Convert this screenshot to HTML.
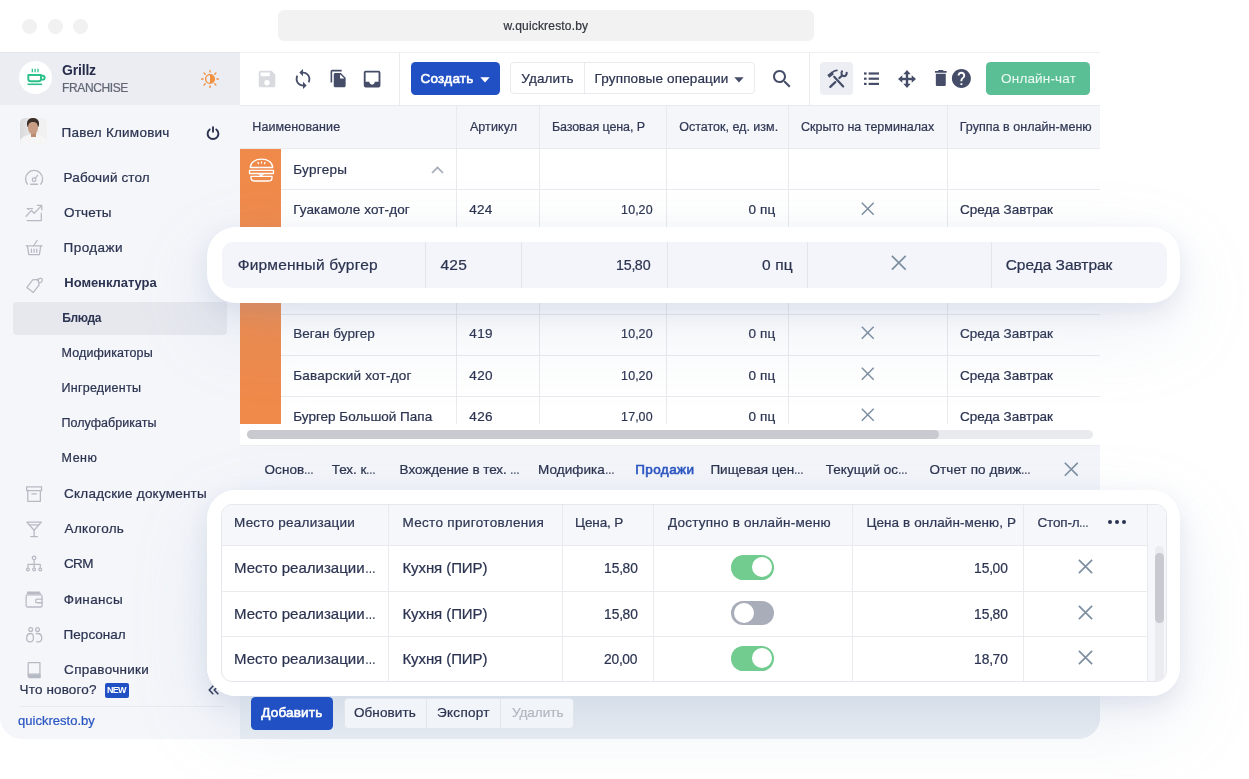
<!DOCTYPE html>
<html lang="ru"><head><meta charset="utf-8"><title>Quick Resto</title>
<style>
html,body{margin:0;padding:0}
body{width:1249px;height:779px;position:relative;overflow:hidden;background:#fff;font-family:"Liberation Sans",sans-serif}
#win{position:absolute;left:0;top:0;width:1100px;height:739px;overflow:hidden;will-change:transform;border-radius:0 0 22px 22px}
#cards{position:absolute;left:0;top:0;width:1249px;height:779px;will-change:transform}
.t{position:absolute;white-space:nowrap;line-height:1;-webkit-text-stroke:0.22px}
.el{display:inline-block;transform:scaleX(0.72);transform-origin:0 0;margin-right:-0.28em;letter-spacing:0}
.cm{margin:0 -0.03em 0 -0.02em}
</style></head><body>
<div id="win"><div style="position:absolute;left:0px;top:0px;width:1100px;height:52px;background:#fff"></div>
<div style="position:absolute;left:21.5px;top:18.5px;width:15px;height:15px;border-radius:50%;background:#f1f1f2"></div>
<div style="position:absolute;left:47.5px;top:18.5px;width:15px;height:15px;border-radius:50%;background:#f1f1f2"></div>
<div style="position:absolute;left:73.0px;top:18.5px;width:15px;height:15px;border-radius:50%;background:#f1f1f2"></div>
<div style="position:absolute;left:278px;top:10px;width:536px;height:30.5px;border-radius:6px;background:#f2f2f3"></div>
<span id="t1" class="t" style="left:503.60px;top:19.84px;font-size:12px;font-weight:400;color:#33363f;letter-spacing:0.168px;">w.quickresto.by</span>
<div style="position:absolute;left:0px;top:52px;width:240px;height:687px;background:#f4f6fa"></div>
<div style="position:absolute;left:0px;top:52px;width:240px;height:53.3px;background:#ecedf3;border-top:1px solid #e5e6ec;box-sizing:border-box"></div>
<div style="position:absolute;left:240px;top:52px;width:860px;height:687px;background:#fff"></div>
<div style="position:absolute;left:240px;top:52px;width:860px;height:1px;background:#eef0f3"></div>
<div style="position:absolute;left:240px;top:104.5px;width:860px;height:1px;background:#e8eaee"></div>
<div style="position:absolute;left:398.9px;top:52px;width:1px;height:53px;background:#e9ebef"></div>
<div style="position:absolute;left:809.1px;top:52px;width:1px;height:53px;background:#e9ebef"></div>
<div style="position:absolute;left:19px;top:61px;width:33px;height:33px;border-radius:50%;background:#fff"></div>
<svg style="position:absolute;left:19px;top:61px;" width="33" height="33" viewBox="0 0 33 33"><g fill="none" stroke="#2fc18c" stroke-width="1.950" stroke-linejoin="round">
<path d="M9.300 14H22v3.700a2.600 2.600 0 0 1-2.600 2.600H11.900a2.600 2.600 0 0 1-2.600-2.600z"/>
<path d="M22 14.800h1.700a1.900 1.900 0 0 1 0 3.800H21.800"/>
<path d="M8.500 23.300h14.600" stroke-width="1.600"/>
<path d="M13.300 7.700v3.600M16.100 7.700v3.600M19 7.700v3.600" stroke-width="1.300"/></g></svg>
<span id="t2" class="t" style="left:62.10px;top:63.15px;font-size:14px;font-weight:700;color:#262d4a;letter-spacing:-0.200px;-webkit-text-stroke:0;">Grillz</span>
<span id="t3" class="t" style="left:62.05px;top:81.64px;font-size:12px;font-weight:400;color:#626775;letter-spacing:-0.381px;">FRANCHISE</span>
<svg style="position:absolute;left:199.5px;top:68.5px;" width="20" height="20" viewBox="0 0 20 20"><g stroke="#f0913f" stroke-width="1.400" stroke-linecap="round" fill="none">
<circle cx="10" cy="10" r="4.400"/><path d="M10 5.600a4.400 4.400 0 0 1 0 8.800z" fill="#f0913f" stroke="none"/>
<path d="M10 1.600v1.500M10 16.900v1.500M1.600 10h1.500M16.900 10h1.500M4.100 4.100l1.100 1.100M14.800 14.800l1.100 1.100M4.100 15.900l1.100-1.100M14.800 5.200l1.100-1.100"/></g></svg>
<div style="position:absolute;left:19.800px;top:118.200px;width:27px;height:27.200px;border-radius:5px;overflow:hidden;background:linear-gradient(90deg,#dadadc,#f1f1f2 70%)"><div style="position:absolute;left:-1px;top:16.500px;width:29px;height:16px;border-radius:10px 10px 0 0;background:#f6f6f7"></div><div style="position:absolute;left:10.800px;top:13px;width:5px;height:6px;background:#b98a70"></div><div style="position:absolute;left:7.600px;top:0.300px;width:11.400px;height:10px;border-radius:50% 50% 35% 35%;background:#3b2f2a"></div><div style="position:absolute;left:8.700px;top:3.600px;width:9.200px;height:12.600px;border-radius:42% 42% 48% 48%;background:#c99c84"></div></div>
<span id="t4" class="t" style="left:61.60px;top:125.57px;font-size:13.5px;font-weight:400;color:#2b3350;letter-spacing:0.231px;">Павел Климович</span>
<svg style="position:absolute;left:205.2px;top:125px;" width="16" height="16" viewBox="0 0 16 16"><g fill="none" stroke="#2b3350" stroke-width="1.900" stroke-linecap="round"><path d="M4.700 4.400a5.400 5.400 0 1 0 6.600 0"/><path d="M8 2.200v4.600"/></g></svg>
<svg style="position:absolute;left:24.4px;top:168.3px;" width="20.2" height="20.2" viewBox="0 0 19 19"><g fill="none" stroke="#b7bac3" stroke-width="1.2" stroke-linecap="round" stroke-linejoin="round"><path d="M3.2 15.2a8 8 0 1 1 12.6 0"/><circle cx="9.5" cy="11" r="1.7"/><path d="M10.6 9.8l2.2-3"/><path d="M6.3 15.3h6.4"/></g></svg>
<span id="t5" class="t" style="left:63.60px;top:170.57px;font-size:13.5px;font-weight:400;color:#2b3350;letter-spacing:0.127px;">Рабочий стол</span>
<svg style="position:absolute;left:24.4px;top:203.3px;" width="20.2" height="20.2" viewBox="0 0 19 19"><g fill="none" stroke="#b7bac3" stroke-width="1.2" stroke-linecap="round" stroke-linejoin="round"><path d="M2 12.5l5-5.5 2.6 2.6L16.5 2.5"/><path d="M12.6 2.3h4.1v4.1"/><path d="M4.2 6v0M16.3 9.5v7H3"/><path d="M3 5.3h5"/></g></svg>
<span id="t6" class="t" style="left:64.10px;top:205.57px;font-size:13.5px;font-weight:400;color:#2b3350;letter-spacing:0.150px;">Отчеты</span>
<svg style="position:absolute;left:24.4px;top:238.3px;" width="20.2" height="20.2" viewBox="0 0 19 19"><g fill="none" stroke="#b7bac3" stroke-width="1.2" stroke-linecap="round" stroke-linejoin="round"><path d="M2 7.5h15"/><path d="M3.3 7.7l1.2 8h10l1.2-8"/><path d="M7 10.5v3M9.5 10.5v3M12 10.5v3"/><path d="M9 7.3l3.4-5"/></g></svg>
<span id="t7" class="t" style="left:63.60px;top:240.57px;font-size:13.5px;font-weight:400;color:#2b3350;letter-spacing:0.417px;">Продажи</span>
<svg style="position:absolute;left:24.4px;top:273.69999999999993px;" width="20.2" height="20.2" viewBox="0 0 19 19"><g fill="none" stroke="#b7bac3" stroke-width="1.2" stroke-linecap="round" stroke-linejoin="round"><path d="M2.3 11.8l6.4-6.4 5.2 0.2 0.2 5.2-6.4 6.4z" transform="rotate(-8 9.5 9.5)"/><path d="M12.5 6.2c1.2-2.4 3.8-3 4.6-1.2.6 1.5-.8 3-2.4 3.2"/></g></svg>
<span id="t8" class="t" style="left:64.35px;top:276.40px;font-size:13px;font-weight:700;color:#2b3350;letter-spacing:-0.059px;-webkit-text-stroke:0;">Номенклатура</span>
<div style="position:absolute;left:13px;top:302px;width:214px;height:32.5px;border-radius:4px;background:#e6e8ee"></div>
<span id="t9" class="t" style="left:62.35px;top:312.44px;font-size:12px;font-weight:700;color:#2b3350;letter-spacing:-0.400px;-webkit-text-stroke:0;">Блюда</span>
<span id="t10" class="t" style="left:61.60px;top:346.82px;font-size:12.5px;font-weight:400;color:#2b3350;letter-spacing:0.127px;">Модификаторы</span>
<span id="t11" class="t" style="left:61.60px;top:381.82px;font-size:12.5px;font-weight:400;color:#2b3350;letter-spacing:0.235px;">Ингредиенты</span>
<span id="t12" class="t" style="left:61.60px;top:417.02px;font-size:12.5px;font-weight:400;color:#2b3350;letter-spacing:0.021px;">Полуфабрикаты</span>
<span id="t13" class="t" style="left:61.60px;top:452.02px;font-size:12.5px;font-weight:400;color:#2b3350;letter-spacing:0.500px;">Меню</span>
<svg style="position:absolute;left:24.4px;top:484.29999999999995px;" width="20.2" height="20.2" viewBox="0 0 19 19"><g fill="none" stroke="#b7bac3" stroke-width="1.2" stroke-linecap="round" stroke-linejoin="round"><rect x="2.5" y="2.7" width="14" height="3.6"/><path d="M3.6 6.5v9.8h11.8V6.5"/><path d="M7.5 9.3h4"/></g></svg>
<span id="t14" class="t" style="left:64.10px;top:486.57px;font-size:13.5px;font-weight:400;color:#2b3350;letter-spacing:0.217px;">Складские документы</span>
<svg style="position:absolute;left:24.4px;top:519.3px;" width="20.2" height="20.2" viewBox="0 0 19 19"><g fill="none" stroke="#b7bac3" stroke-width="1.2" stroke-linecap="round" stroke-linejoin="round"><path d="M2.7 3h13.6L9.5 10.6z"/><path d="M9.5 10.6v5.8M6.3 16.5h6.4"/><path d="M5 5.6h9"/></g></svg>
<span id="t15" class="t" style="left:64.60px;top:521.57px;font-size:13.5px;font-weight:400;color:#2b3350;letter-spacing:0.293px;">Алкоголь</span>
<svg style="position:absolute;left:24.4px;top:554.3px;" width="20.2" height="20.2" viewBox="0 0 19 19"><g fill="none" stroke="#b7bac3" stroke-width="1.2" stroke-linecap="round" stroke-linejoin="round"><circle cx="9.5" cy="3.6" r="1.7"/><path d="M9.5 5.4v4.2M3.7 13v-3.3h11.6V13M9.5 9.7V13"/><circle cx="3.7" cy="14.6" r="1.3"/><circle cx="9.5" cy="14.6" r="1.3"/><circle cx="15.3" cy="14.6" r="1.3"/></g></svg>
<span id="t16" class="t" style="left:64.10px;top:556.57px;font-size:13.5px;font-weight:400;color:#2b3350;letter-spacing:-0.725px;">CRM</span>
<svg style="position:absolute;left:24.4px;top:590.4px;" width="20.2" height="20.2" viewBox="0 0 19 19"><g fill="none" stroke="#b7bac3" stroke-width="1.2" stroke-linecap="round" stroke-linejoin="round"><rect x="2" y="4.6" width="15" height="11.4" rx="1.5"/><path d="M3 3.2h12.5M3.5 1.9h11"/><path d="M17 8.6h-4.4a1.7 1.7 0 0 0 0 3.4H17"/></g></svg>
<span id="t17" class="t" style="left:63.85px;top:592.67px;font-size:13.5px;font-weight:400;color:#2b3350;letter-spacing:0.358px;">Финансы</span>
<svg style="position:absolute;left:24.4px;top:625.4px;" width="20.2" height="20.2" viewBox="0 0 19 19"><g fill="none" stroke="#b7bac3" stroke-width="1.2" stroke-linecap="round" stroke-linejoin="round"><circle cx="6.3" cy="4.2" r="1.8"/><circle cx="12.7" cy="4.2" r="1.8"/><path d="M6.5 8c-2.6 0-4 1.6-4 4.2 0 2.2 1.2 3.6 3.2 3.6 1.8 0 3.2-1.2 3.2-3.6C8.9 9.6 8.3 8 6.5 8z"/><path d="M11.4 8h1.3c2.6 0 4 1.6 4 4.200 0 2.2-1.2 3.600-3.200 3.600h-1.6"/></g></svg>
<span id="t18" class="t" style="left:63.60px;top:627.67px;font-size:13.5px;font-weight:400;color:#2b3350;letter-spacing:0.021px;">Персонал</span>
<svg style="position:absolute;left:24.4px;top:660.4px;" width="20.2" height="20.2" viewBox="0 0 19 19"><g fill="none" stroke="#b7bac3" stroke-width="1.2" stroke-linecap="round" stroke-linejoin="round"><path d="M4 2.500h11v14H5.300a1.500 1.500 0 0 1-1.400-1.500z"/><path d="M4 13.200h11" /><path d="M4.200 14.200h10.800v2H5.200z" fill="#b5b9c4"/></g></svg>
<span id="t19" class="t" style="left:64.10px;top:662.67px;font-size:13.5px;font-weight:400;color:#2b3350;letter-spacing:0.290px;">Справочники</span>
<span id="t20" class="t" style="left:19.60px;top:682.57px;font-size:13.5px;font-weight:400;color:#2b3350;letter-spacing:0.140px;">Что нового?</span>
<div style="position:absolute;left:104.6px;top:682.5px;width:24.8px;height:15.2px;border-radius:2px;background:#2150c4"></div>
<span id="t21" class="t" style="left:107.10px;top:686.18px;font-size:9px;font-weight:700;color:#fff;letter-spacing:-0.750px;-webkit-text-stroke:0;">NEW</span>
<svg style="position:absolute;left:207.5px;top:684.5px;" width="12" height="10" viewBox="0 0 12 10"><path d="M5.300 0.800L1.300 5l4 4.200M10.300 0.800L6.300 5l4 4.200" fill="none" stroke="#2b3350" stroke-width="1.600"/></svg>
<div style="position:absolute;left:20px;top:706.1px;width:204px;height:1px;background:#e8eaef"></div>
<span id="t22" class="t" style="left:18.10px;top:713.80px;font-size:13px;font-weight:400;color:#2a55c2;letter-spacing:0.013px;">quickresto.by</span>
<svg style="position:absolute;left:255.7px;top:67.5px;" width="22" height="22" viewBox="0 0 24 24"><path fill="#d8dae0" d="M17 3H5c-1.11 0-2 .9-2 2v14c0 1.1.89 2 2 2h14c1.1 0 2-.9 2-2V7l-4-4zm-5 16c-1.660 0-3-1.340-3-3s1.340-3 3-3 3 1.340 3 3-1.340 3-3 3zm3-10H5V5h10v4z"/></svg>
<svg style="position:absolute;left:291.5px;top:67.6px;" width="22" height="22" viewBox="0 0 24 24"><path fill="#454d68" d="M12 4V1L8 5l4 4V6c3.310 0 6 2.690 6 6 0 1.010-.250 1.970-.700 2.800l1.460 1.460C19.540 15.030 20 13.570 20 12c0-4.420-3.580-8-8-8zm0 14c-3.310 0-6-2.690-6-6 0-1.010.250-1.970.700-2.800L5.240 7.740C4.460 8.970 4 10.430 4 12c0 4.420 3.580 8 8 8v3l4-4-4-4v3z"/></svg>
<svg style="position:absolute;left:329.2px;top:69px;" width="19" height="19" viewBox="0 0 24 24"><path fill="#454d68" d="M16 1H4c-1.100 0-2 .9-2 2v14h2V3h12V1zm-1 4l6 6v10c0 1.100-.9 2-2 2H7.990C6.890 23 6 22.100 6 21l.010-14c0-1.100.890-2 1.990-2h7zm-1 7h5.500L14 6.500V12z"/></svg>
<svg style="position:absolute;left:361px;top:67.6px;" width="22.2" height="22.2" viewBox="0 0 24 24"><path fill="#454d68" d="M19 3H4.990c-1.110 0-1.980.9-1.980 2L3 19c0 1.100.880 2 1.990 2H19c1.100 0 2-.9 2-2V5c0-1.100-.9-2-2-2zm0 12h-4c0 1.660-1.350 3-3 3s-3-1.340-3-3H4.990V5H19v10z"/></svg>
<div style="position:absolute;left:410.5px;top:62px;width:89px;height:33px;border-radius:4.5px;background:#2150c4"></div>
<span id="t23" class="t" style="left:420.50px;top:71.57px;font-size:13.5px;font-weight:400;color:#fff;letter-spacing:0.250px;-webkit-text-stroke:0.600px;">Создать</span>
<svg style="position:absolute;left:479.5px;top:76.5px;" width="10" height="6" viewBox="0 0 10 6"><path d="M0.3 0.300h9.400L5 5.500z" fill="#fff"/></svg>
<div style="position:absolute;left:510px;top:62.4px;width:244.5px;height:32px;border-radius:4px;border:1px solid #e8eaee;box-sizing:border-box;background:#fff"></div>
<div style="position:absolute;left:583.7px;top:62.4px;width:1px;height:32px;background:#e8eaee"></div>
<span id="t24" class="t" style="left:521.25px;top:71.57px;font-size:13.5px;font-weight:400;color:#2b3350;letter-spacing:0.125px;">Удалить</span>
<span id="t25" class="t" style="left:594.60px;top:71.57px;font-size:13.5px;font-weight:400;color:#2b3350;letter-spacing:0.150px;">Групповые операции</span>
<svg style="position:absolute;left:734px;top:76.5px;" width="10" height="6" viewBox="0 0 10 6"><path d="M0.300 0.300h9.400L5 5.500z" fill="#454d68"/></svg>
<svg style="position:absolute;left:770.3px;top:67.3px;" width="24" height="24" viewBox="0 0 24 24"><path fill="#454d68" d="M15.500 14h-.790l-.280-.270C15.410 12.590 16 11.110 16 9.500 16 5.910 13.090 3 9.500 3S3 5.910 3 9.500 5.910 16 9.500 16c1.610 0 3.090-.590 4.230-1.570l.270.280v.790l5 4.990L20.490 19l-4.990-5zm-6 0C7.010 14 5 11.990 5 9.500S7.010 5 9.500 5 14 7.010 14 9.500 11.990 14 9.500 14z"/></svg>
<div style="position:absolute;left:820px;top:62px;width:32.5px;height:32.5px;border-radius:4px;background:#eceef4"></div>
<svg style="position:absolute;left:820px;top:62px;" width="33" height="33" viewBox="0 0 33 33"><g stroke="#454d68" fill="none" stroke-linecap="round"><path d="M14.200 14.800L23.200 24.400" stroke-width="2.200"/><path d="M8.300 14.400L12.900 10.900" stroke-width="3.300" stroke-linecap="butt"/><path d="M12 10.600C13.500 9.200 15.200 8.500 16.900 8.400" stroke-width="1.700"/><path d="M10.300 24.900L15.300 20.100" stroke-width="2.200"/><path d="M19.400 16L22 13.600" stroke-width="2.200"/><path d="M22 9.300C20.900 11.300 21.600 13.600 23.600 14.100C25.200 14.500 26.600 13.200 26.700 10.900" stroke-width="2.100"/></g></svg>
<svg style="position:absolute;left:863.5px;top:72px;" width="15" height="13.5" viewBox="0 0 15 13.500"><g fill="#454d68"><rect x="0" y="0.400" width="2.600" height="2.200"/><rect x="4.600" y="0.400" width="10.400" height="2.200"/><rect x="0" y="5.600" width="2.600" height="2.200"/><rect x="4.600" y="5.600" width="10.400" height="2.200"/><rect x="0" y="10.800" width="2.600" height="2.200"/><rect x="4.600" y="10.800" width="10.400" height="2.200"/></g></svg>
<svg style="position:absolute;left:898.2px;top:69.8px;" width="18" height="18" viewBox="0 0 18 18"><g fill="#454d68"><rect x="7.800" y="3" width="2.400" height="12"/><rect x="3" y="7.800" width="12" height="2.400"/><path d="M9 0l3.700 4.300H5.300zM9 18l3.700-4.300H5.300zM0 9l4.300-3.700v7.400zM18 9l-4.300-3.700v7.400z"/></g></svg>
<svg style="position:absolute;left:935.400px;top:70px" width="11.600" height="16.400" viewBox="5 3 14 18" preserveAspectRatio="none"><path fill="#454d68" d="M6 19c0 1.100.9 2 2 2h8c1.100 0 2-.9 2-2V7H6v12zM19 4h-3.500l-1-1h-5l-1 1H5v2h14V4z"/></svg>
<svg style="position:absolute;left:949.6px;top:66.9px;" width="22.8" height="22.8" viewBox="0 0 24 24"><path fill="#454d68" d="M12 2C6.480 2 2 6.480 2 12s4.480 10 10 10 10-4.480 10-10S17.520 2 12 2zm1 17h-2v-2h2v2zm2.070-7.750l-.9.920C13.450 12.900 13 13.500 13 15h-2v-.5c0-1.100.450-2.100 1.170-2.830l1.240-1.260c.370-.360.590-.860.590-1.410 0-1.100-.9-2-2-2s-2 .9-2 2H8c0-2.210 1.790-4 4-4s4 1.790 4 4c0 .880-.360 1.680-.930 2.250z"/></svg>
<div style="position:absolute;left:986px;top:62px;width:104px;height:32.6px;border-radius:4.500px;background:#5bbf96"></div>
<span id="t26" class="t" style="left:1001.10px;top:71.57px;font-size:13.5px;font-weight:400;color:#e9f9f1;letter-spacing:0.167px;-webkit-text-stroke:0.080px;">Онлайн-чат</span>
<div style="position:absolute;left:240px;top:105.5px;width:860px;height:42.7px;background:#f5f6fa"></div>
<div style="position:absolute;left:240px;top:148px;width:860px;height:1px;background:#e8eaee"></div>
<span id="t27" class="t" style="left:252.30px;top:120.82px;font-size:12.5px;font-weight:400;color:#2f3754;letter-spacing:0.105px;">Наименование</span>
<span id="t28" class="t" style="left:469.90px;top:120.82px;font-size:12.5px;font-weight:400;color:#2f3754;letter-spacing:0.108px;">Артикул</span>
<span id="t29" class="t" style="left:551.90px;top:120.82px;font-size:12.5px;font-weight:400;color:#2f3754;letter-spacing:-0.082px;">Базовая цена, Р</span>
<span id="t30" class="t" style="left:679.20px;top:120.82px;font-size:12.5px;font-weight:400;color:#2f3754;letter-spacing:0.006px;">Остаток, ед. изм.</span>
<span id="t31" class="t" style="left:801.00px;top:120.82px;font-size:12.5px;font-weight:400;color:#2f3754;letter-spacing:0.003px;">Скрыто на терминалах</span>
<span id="t32" class="t" style="left:959.70px;top:120.82px;font-size:12.5px;font-weight:400;color:#2f3754;letter-spacing:0.045px;">Группа в онлайн-меню</span>
<span id="t33" class="t" style="left:293.20px;top:162.57px;font-size:13.5px;font-weight:400;color:#2b3350;letter-spacing:0.292px;">Бургеры</span>
<div style="position:absolute;left:281.4px;top:189.38px;width:818.6px;height:1px;background:#e8eaee"></div>
<span id="t34" class="t" style="left:293.20px;top:202.77px;font-size:13.5px;font-weight:400;color:#2b3350;letter-spacing:0.119px;">Гуакамоле хот-дог</span>
<span id="t35" class="t" style="left:469.35px;top:202.77px;font-size:13.5px;font-weight:400;color:#2b3350;letter-spacing:0.200px;">424</span>
<span id="t36" class="t" style="left:620.65px;top:202.77px;font-size:13.5px;font-weight:400;color:#2b3350;letter-spacing:0.299px;transform:scaleX(0.92);transform-origin:0 0;">10<span class="cm">,</span>20</span>
<span id="t37" class="t" style="left:748.50px;top:202.77px;font-size:13.5px;font-weight:400;color:#2b3350;letter-spacing:0.167px;">0 пц</span>
<svg style="position:absolute;left:861px;top:201.54999999999998px;" width="13.5" height="13.5" viewBox="0 0 13.500 13.500"><path d="M0.800 0.800l11.900 11.900M12.700 0.800L0.800 12.700" stroke="#7d8fa1" stroke-width="1.500" fill="none"/></svg>
<span id="t38" class="t" style="left:960.10px;top:202.77px;font-size:13.5px;font-weight:400;color:#2b3350;letter-spacing:-0.029px;">Среда Завтрак</span>
<div style="position:absolute;left:281.4px;top:230.76px;width:818.6px;height:1px;background:#e8eaee"></div>
<div style="position:absolute;left:281.4px;top:272.14px;width:818.6px;height:1px;background:#e8eaee"></div>
<div style="position:absolute;left:281.4px;top:313.52px;width:818.6px;height:1px;background:#e8eaee"></div>
<span id="t39" class="t" style="left:293.20px;top:327.37px;font-size:13.5px;font-weight:400;color:#2b3350;letter-spacing:0.045px;">Веган бургер</span>
<span id="t40" class="t" style="left:469.35px;top:327.37px;font-size:13.5px;font-weight:400;color:#2b3350;letter-spacing:0.325px;">419</span>
<span id="t41" class="t" style="left:620.65px;top:327.37px;font-size:13.5px;font-weight:400;color:#2b3350;letter-spacing:0.299px;transform:scaleX(0.92);transform-origin:0 0;">10<span class="cm">,</span>20</span>
<span id="t42" class="t" style="left:748.50px;top:327.37px;font-size:13.5px;font-weight:400;color:#2b3350;letter-spacing:0.167px;">0 пц</span>
<svg style="position:absolute;left:861px;top:326.15000000000003px;" width="13.5" height="13.5" viewBox="0 0 13.500 13.500"><path d="M0.800 0.800l11.900 11.900M12.700 0.800L0.800 12.700" stroke="#7d8fa1" stroke-width="1.500" fill="none"/></svg>
<span id="t43" class="t" style="left:960.10px;top:327.37px;font-size:13.5px;font-weight:400;color:#2b3350;letter-spacing:-0.029px;">Среда Завтрак</span>
<div style="position:absolute;left:281.4px;top:354.9px;width:818.6px;height:1px;background:#e8eaee"></div>
<span id="t44" class="t" style="left:293.20px;top:368.67px;font-size:13.5px;font-weight:400;color:#2b3350;letter-spacing:0.219px;">Баварский хот-дог</span>
<span id="t45" class="t" style="left:469.35px;top:368.67px;font-size:13.5px;font-weight:400;color:#2b3350;letter-spacing:0.325px;">420</span>
<span id="t46" class="t" style="left:620.65px;top:368.67px;font-size:13.5px;font-weight:400;color:#2b3350;letter-spacing:0.299px;transform:scaleX(0.92);transform-origin:0 0;">10<span class="cm">,</span>20</span>
<span id="t47" class="t" style="left:748.50px;top:368.67px;font-size:13.5px;font-weight:400;color:#2b3350;letter-spacing:0.167px;">0 пц</span>
<svg style="position:absolute;left:861px;top:367.45000000000005px;" width="13.5" height="13.5" viewBox="0 0 13.500 13.500"><path d="M0.800 0.800l11.900 11.900M12.700 0.800L0.800 12.700" stroke="#7d8fa1" stroke-width="1.500" fill="none"/></svg>
<span id="t48" class="t" style="left:960.10px;top:368.67px;font-size:13.5px;font-weight:400;color:#2b3350;letter-spacing:-0.029px;">Среда Завтрак</span>
<div style="position:absolute;left:281.4px;top:396.28000000000003px;width:818.6px;height:1px;background:#e8eaee"></div>
<span id="t49" class="t" style="left:293.20px;top:409.67px;font-size:13.5px;font-weight:400;color:#2b3350;letter-spacing:0.014px;">Бургер Большой Папа</span>
<span id="t50" class="t" style="left:469.35px;top:409.67px;font-size:13.5px;font-weight:400;color:#2b3350;letter-spacing:0.325px;">426</span>
<span id="t51" class="t" style="left:620.65px;top:409.67px;font-size:13.5px;font-weight:400;color:#2b3350;letter-spacing:0.299px;transform:scaleX(0.92);transform-origin:0 0;">17<span class="cm">,</span>00</span>
<span id="t52" class="t" style="left:748.50px;top:409.67px;font-size:13.5px;font-weight:400;color:#2b3350;letter-spacing:0.167px;">0 пц</span>
<svg style="position:absolute;left:861px;top:408.45000000000005px;" width="13.5" height="13.5" viewBox="0 0 13.500 13.500"><path d="M0.800 0.800l11.900 11.900M12.700 0.800L0.800 12.700" stroke="#7d8fa1" stroke-width="1.500" fill="none"/></svg>
<span id="t53" class="t" style="left:960.10px;top:409.67px;font-size:13.5px;font-weight:400;color:#2b3350;letter-spacing:-0.029px;">Среда Завтрак</span>
<div style="position:absolute;left:455.9px;top:105.5px;width:1px;height:320px;background:#e8eaee"></div>
<div style="position:absolute;left:538.9px;top:105.5px;width:1px;height:320px;background:#e8eaee"></div>
<div style="position:absolute;left:665.9px;top:105.5px;width:1px;height:320px;background:#e8eaee"></div>
<div style="position:absolute;left:787.7px;top:105.5px;width:1px;height:320px;background:#e8eaee"></div>
<div style="position:absolute;left:946.9px;top:105.5px;width:1px;height:320px;background:#e8eaee"></div>
<div style="position:absolute;left:240px;top:149px;width:41.4px;height:274.8px;background:#ef8a4b"></div>
<svg style="position:absolute;left:247.5px;top:156.5px;" width="27" height="26" viewBox="0 0 27 26"><g fill="none" stroke="#fff" stroke-width="1.300" stroke-linecap="round" stroke-linejoin="round">
<path d="M2.300 10.500c0-5 4.800-8.300 11.200-8.300s11.200 3.300 11.200 8.300z"/>
<path d="M1.500 13.300h24v3.200h-24z"/>
<path d="M3 19.300h21v1.500a3.200 3.200 0 0 1-3.200 3.200H6.200A3.200 3.200 0 0 1 3 20.800z"/>
<path d="M11 16.700l2.200 2 2.200-2"/>
<path d="M10 5.500l.5 1.200M13.500 4.800v1.300M17 5.500l-.5 1.200"/></g></svg>
<svg style="position:absolute;left:431px;top:165.5px;" width="13" height="8" viewBox="0 0 13 8"><path d="M1 7l5.500-5.500L12 7" fill="none" stroke="#a3a9b5" stroke-width="1.700"/></svg>
<div style="position:absolute;left:240px;top:423.8px;width:860px;height:21.5px;background:#fff"></div>
<div style="position:absolute;left:246.5px;top:430px;width:846px;height:8.5px;border-radius:4.500px;background:#e9eaee"></div>
<div style="position:absolute;left:246.5px;top:430px;width:692px;height:8.5px;border-radius:4.500px;background:#c9cad0"></div>
<div style="position:absolute;left:240px;top:445px;width:860px;height:46px;background:#f3f5fa;border-top:1px solid #eceef2;box-sizing:border-box"></div>
<span id="t54" class="t" style="left:264.50px;top:462.57px;font-size:13.5px;font-weight:400;color:#2b3350;letter-spacing:0.080px;">Основ<span class="el">…</span></span>
<span id="t55" class="t" style="left:331.75px;top:462.57px;font-size:13.5px;font-weight:400;color:#2b3350;letter-spacing:-0.042px;">Тех. к<span class="el">…</span></span>
<span id="t56" class="t" style="left:399.60px;top:462.57px;font-size:13.5px;font-weight:400;color:#2b3350;letter-spacing:-0.065px;">Вхождение в тех. <span class="el">…</span></span>
<span id="t57" class="t" style="left:538.00px;top:462.57px;font-size:13.5px;font-weight:400;color:#2b3350;letter-spacing:0.062px;">Модифика<span class="el">…</span></span>
<span id="t58" class="t" style="left:635.25px;top:462.57px;font-size:13.5px;font-weight:400;color:#2a55c2;letter-spacing:0.400px;-webkit-text-stroke:0.600px;">Продажи</span>
<span id="t59" class="t" style="left:710.40px;top:462.57px;font-size:13.5px;font-weight:400;color:#2b3350;letter-spacing:0.009px;">Пищевая цен<span class="el">…</span></span>
<span id="t60" class="t" style="left:825.75px;top:462.57px;font-size:13.5px;font-weight:400;color:#2b3350;letter-spacing:0.035px;">Текущий ос<span class="el">…</span></span>
<span id="t61" class="t" style="left:929.50px;top:462.57px;font-size:13.5px;font-weight:400;color:#2b3350;letter-spacing:0.077px;">Отчет по движ<span class="el">…</span></span>
<svg style="position:absolute;left:1063.5px;top:462px;" width="14.5" height="14.5" viewBox="0 0 14.500 14.500"><path d="M0.800 0.800l12.900 12.900M13.700 0.800L0.800 13.700" stroke="#7d8fa1" stroke-width="1.600" fill="none"/></svg>
<div style="position:absolute;left:240px;top:491px;width:860px;height:248px;background:linear-gradient(#fff 0,#fff 190px,#d3dce8 204px,#e4e9f1 248px)"></div></div>
<div id="cards"><div style="position:absolute;left:207.4px;top:226.8px;width:972.8px;height:75.8px;border-radius:29px;background:#fff;box-shadow:0 9px 24px rgba(130,145,185,0.20),0 28px 80px rgba(135,155,190,0.15)"></div>
<div style="position:absolute;left:222px;top:242px;width:944.5px;height:46px;border-radius:11px;background:#f3f5fa"></div>
<div style="position:absolute;left:425px;top:242px;width:1px;height:46px;background:#e3e5ea"></div>
<div style="position:absolute;left:521px;top:242px;width:1px;height:46px;background:#e3e5ea"></div>
<div style="position:absolute;left:667px;top:242px;width:1px;height:46px;background:#e3e5ea"></div>
<div style="position:absolute;left:807px;top:242px;width:1px;height:46px;background:#e3e5ea"></div>
<div style="position:absolute;left:991px;top:242px;width:1px;height:46px;background:#e3e5ea"></div>
<span id="t62" class="t" style="left:237.65px;top:257.08px;font-size:15.5px;font-weight:400;color:#2b3350;letter-spacing:0.207px;">Фирменный бургер</span>
<span id="t63" class="t" style="left:440.55px;top:257.08px;font-size:15.5px;font-weight:400;color:#2b3350;letter-spacing:0.200px;">425</span>
<span id="t64" class="t" style="left:616.30px;top:257.08px;font-size:15.5px;font-weight:400;color:#2b3350;letter-spacing:-0.109px;transform:scaleX(0.92);transform-origin:0 0;">15<span class="cm">,</span>80</span>
<span id="t65" class="t" style="left:761.90px;top:257.08px;font-size:15.5px;font-weight:400;color:#2b3350;letter-spacing:0.167px;">0 пц</span>
<svg style="position:absolute;left:891.3px;top:254.8px;" width="15.6" height="15.6" viewBox="0 0 15.600 15.600"><path d="M0.900 0.900l13.800 13.800M14.700 0.900L0.900 14.700" stroke="#7d8fa1" stroke-width="1.700" fill="none"/></svg>
<span id="t66" class="t" style="left:1005.65px;top:257.08px;font-size:15.5px;font-weight:400;color:#2b3350;letter-spacing:-0.025px;">Среда Завтрак</span>
<div style="position:absolute;left:207.4px;top:490.4px;width:972.8px;height:205.6px;border-radius:29px;background:#fff;box-shadow:0 9px 24px rgba(130,145,185,0.20),0 28px 80px rgba(135,155,190,0.15)"></div>
<div style="position:absolute;left:240px;top:680px;width:860px;height:59px;border-radius:0 0 22px 0;background:linear-gradient(#d5dee9 0,#d5dee9 16px,#e5eaf1 59px)"></div>
<div style="position:absolute;left:250.5px;top:696.6px;width:82.6px;height:33px;border-radius:4.500px;background:#2150c4"></div>
<span id="t67" class="t" style="left:261.25px;top:706.27px;font-size:13.5px;font-weight:400;color:#fff;letter-spacing:0.179px;-webkit-text-stroke:0.600px;">Добавить</span>
<div style="position:absolute;left:344px;top:698px;width:230.3px;height:30.6px;border-radius:4px;border:1px solid #e1e5ec;box-sizing:border-box;background:#f1f4f9"></div>
<div style="position:absolute;left:425.9px;top:698px;width:1px;height:30.6px;background:#e1e5ec"></div>
<div style="position:absolute;left:500.1px;top:698px;width:1px;height:30.6px;background:#e1e5ec"></div>
<span id="t68" class="t" style="left:353.90px;top:706.27px;font-size:13.5px;font-weight:400;color:#2b3350;letter-spacing:0.107px;">Обновить</span>
<span id="t69" class="t" style="left:437.10px;top:706.27px;font-size:13.5px;font-weight:400;color:#2b3350;letter-spacing:0.258px;">Экспорт</span>
<span id="t70" class="t" style="left:511.95px;top:706.27px;font-size:13.5px;font-weight:400;color:#b3b7c0;letter-spacing:0.008px;">Удалить</span>
<div style="position:absolute;left:207.4px;top:490.4px;width:972.8px;height:205.6px;border-radius:29px;background:#fff"></div>
<div style="position:absolute;left:221px;top:504px;width:945.600px;height:177.500px;border:1px solid #e5e7ec;border-radius:11px;box-sizing:border-box;overflow:hidden;background:#fff"><div style="position:absolute;left:0;top:0;width:945px;height:41px;background:#f5f7fb"></div><div style="position:absolute;left:925px;top:0;width:20px;height:180px;background:#f5f7fb"></div><div style="position:absolute;left:932.500px;top:41px;width:9.500px;height:140px;background:#ececf0;border-radius:5px"></div><div style="position:absolute;left:932.500px;top:47.700px;width:9.500px;height:70px;background:#c9cad1;border-radius:5px"></div></div>
<div style="position:absolute;left:222px;top:545.3px;width:925.5px;height:1px;background:#e8eaee"></div>
<div style="position:absolute;left:222px;top:590.5px;width:925.5px;height:1px;background:#e8eaee"></div>
<div style="position:absolute;left:222px;top:636.2px;width:925.5px;height:1px;background:#e8eaee"></div>
<div style="position:absolute;left:388.2px;top:504.5px;width:1px;height:176.5px;background:#e8eaee"></div>
<div style="position:absolute;left:561.6px;top:504.5px;width:1px;height:176.5px;background:#e8eaee"></div>
<div style="position:absolute;left:653px;top:504.5px;width:1px;height:176.5px;background:#e8eaee"></div>
<div style="position:absolute;left:852.4px;top:504.5px;width:1px;height:176.5px;background:#e8eaee"></div>
<div style="position:absolute;left:1023.3px;top:504.5px;width:1px;height:176.5px;background:#e8eaee"></div>
<div style="position:absolute;left:1147px;top:504.5px;width:1px;height:176.5px;background:#e8eaee"></div>
<span id="t71" class="t" style="left:234.00px;top:515.57px;font-size:13.5px;font-weight:400;color:#2f3754;letter-spacing:0.233px;">Место реализации</span>
<span id="t72" class="t" style="left:402.40px;top:515.57px;font-size:13.5px;font-weight:400;color:#2f3754;letter-spacing:0.339px;">Место приготовления</span>
<span id="t73" class="t" style="left:575.00px;top:515.57px;font-size:13.5px;font-weight:400;color:#2f3754;letter-spacing:-0.108px;">Цена, Р</span>
<span id="t74" class="t" style="left:668.00px;top:515.57px;font-size:13.5px;font-weight:400;color:#2f3754;letter-spacing:0.226px;">Доступно в онлайн-меню</span>
<span id="t75" class="t" style="left:866.40px;top:515.57px;font-size:13.5px;font-weight:400;color:#2f3754;letter-spacing:0.088px;">Цена в онлайн-меню, Р</span>
<span id="t76" class="t" style="left:1037.50px;top:515.57px;font-size:13.5px;font-weight:400;color:#2f3754;letter-spacing:-0.167px;">Стоп-л<span class="el">…</span></span>
<div style="position:absolute;left:1107.7px;top:519.5px;width:4.6px;height:4.6px;border-radius:50%;background:#2b3350"></div>
<div style="position:absolute;left:1114.7px;top:519.5px;width:4.6px;height:4.6px;border-radius:50%;background:#2b3350"></div>
<div style="position:absolute;left:1121.7px;top:519.5px;width:4.6px;height:4.6px;border-radius:50%;background:#2b3350"></div>
<span id="t77" class="t" style="left:234.00px;top:560.30px;font-size:15px;font-weight:400;color:#2b3350;letter-spacing:0.006px;">Место реализации<span class="el">…</span></span>
<span id="t78" class="t" style="left:402.40px;top:560.30px;font-size:15px;font-weight:400;color:#2b3350;letter-spacing:-0.080px;">Кухня (ПИР)</span>
<span id="t79" class="t" style="left:603.80px;top:560.30px;font-size:15px;font-weight:400;color:#2b3350;letter-spacing:0.027px;transform:scaleX(0.92);transform-origin:0 0;">15<span class="cm">,</span>80</span>
<span id="t80" class="t" style="left:974.40px;top:560.30px;font-size:15px;font-weight:400;color:#2b3350;letter-spacing:0.027px;transform:scaleX(0.92);transform-origin:0 0;">15<span class="cm">,</span>00</span>
<div style="position:absolute;left:731.4px;top:555px;width:43px;height:24.6px;border-radius:12.300px;background:#72cc8f"></div>
<div style="position:absolute;left:752.4px;top:557.4px;width:19.8px;height:19.8px;border-radius:50%;background:#fff"></div>
<svg style="position:absolute;left:1077.8px;top:559.3px;" width="15" height="15" viewBox="0 0 15 15"><path d="M0.900 0.900l13.200 13.200M14.100 0.900L0.900 14.100" stroke="#7d8fa1" stroke-width="1.700" fill="none"/></svg>
<span id="t81" class="t" style="left:234.00px;top:605.80px;font-size:15px;font-weight:400;color:#2b3350;letter-spacing:0.006px;">Место реализации<span class="el">…</span></span>
<span id="t82" class="t" style="left:402.40px;top:605.80px;font-size:15px;font-weight:400;color:#2b3350;letter-spacing:-0.080px;">Кухня (ПИР)</span>
<span id="t83" class="t" style="left:603.80px;top:605.80px;font-size:15px;font-weight:400;color:#2b3350;letter-spacing:0.027px;transform:scaleX(0.92);transform-origin:0 0;">15<span class="cm">,</span>80</span>
<span id="t84" class="t" style="left:974.40px;top:605.80px;font-size:15px;font-weight:400;color:#2b3350;letter-spacing:0.027px;transform:scaleX(0.92);transform-origin:0 0;">15<span class="cm">,</span>80</span>
<div style="position:absolute;left:731.4px;top:600.5px;width:43px;height:24.6px;border-radius:12.300px;background:#a9adb9"></div>
<div style="position:absolute;left:734px;top:602.9px;width:19.8px;height:19.8px;border-radius:50%;background:#fff"></div>
<svg style="position:absolute;left:1077.8px;top:604.8px;" width="15" height="15" viewBox="0 0 15 15"><path d="M0.900 0.900l13.200 13.200M14.100 0.900L0.900 14.100" stroke="#7d8fa1" stroke-width="1.700" fill="none"/></svg>
<span id="t85" class="t" style="left:234.00px;top:651.30px;font-size:15px;font-weight:400;color:#2b3350;letter-spacing:0.006px;">Место реализации<span class="el">…</span></span>
<span id="t86" class="t" style="left:402.40px;top:651.30px;font-size:15px;font-weight:400;color:#2b3350;letter-spacing:-0.080px;">Кухня (ПИР)</span>
<span id="t87" class="t" style="left:604.30px;top:651.30px;font-size:15px;font-weight:400;color:#2b3350;letter-spacing:-0.109px;transform:scaleX(0.92);transform-origin:0 0;">20<span class="cm">,</span>00</span>
<span id="t88" class="t" style="left:974.40px;top:651.30px;font-size:15px;font-weight:400;color:#2b3350;letter-spacing:0.027px;transform:scaleX(0.92);transform-origin:0 0;">18<span class="cm">,</span>70</span>
<div style="position:absolute;left:731.4px;top:646px;width:43px;height:24.6px;border-radius:12.300px;background:#72cc8f"></div>
<div style="position:absolute;left:752.4px;top:648.4px;width:19.8px;height:19.8px;border-radius:50%;background:#fff"></div>
<svg style="position:absolute;left:1077.8px;top:650.3px;" width="15" height="15" viewBox="0 0 15 15"><path d="M0.900 0.900l13.200 13.200M14.100 0.900L0.900 14.100" stroke="#7d8fa1" stroke-width="1.700" fill="none"/></svg></div>
</body></html>
